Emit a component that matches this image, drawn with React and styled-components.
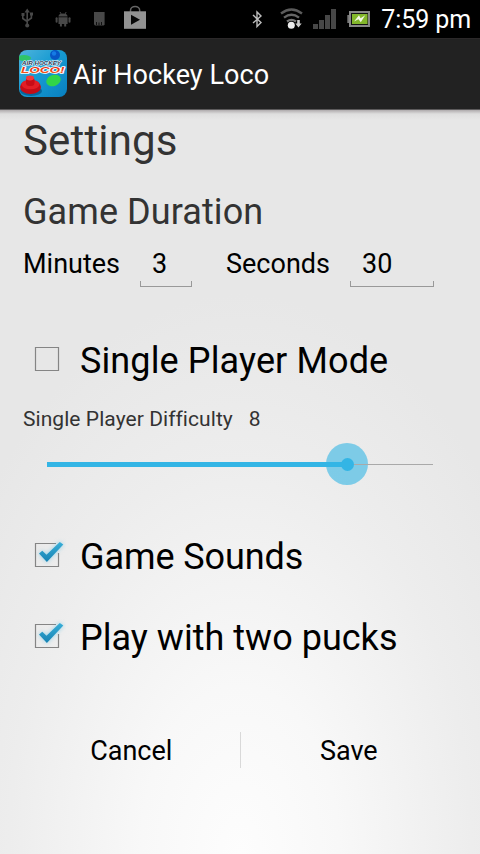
import React from 'react';
import styled, { createGlobalStyle } from 'styled-components';

const GlobalStyle = createGlobalStyle`
  * {
    box-sizing: border-box;
  }

  body {
    margin: 0;
    background: #000;
    font-family: Roboto, "Liberation Sans", sans-serif;
  }
`;

const Screen = styled.div`
  display: flex;
  flex-direction: column;
  width: 480px;
  height: 854px;
  overflow: hidden;
`;

const StatusBar = styled.header`
  display: flex;
  justify-content: space-between;
  height: 38px;
  flex: none;
  background: #000;
`;

const Clock = styled.span`
  margin-right: 9px;
  color: #fff;
  font-size: 25px;
  line-height: 40px;
  letter-spacing: -0.1px;
`;

const StatusGroup = styled.div`
  display: flex;
`;

const ActionBar = styled.div`
  display: flex;
  align-items: center;
  gap: 6px;
  height: 72px;
  flex: none;
  padding-left: 19px;
  background: #222;
  border-top: 1px solid #2b2829;
  border-bottom: 1px solid #5c5a5b;
`;

const AppTitle = styled.h1`
  margin: 2px 0 0;
  color: #fff;
  font-size: 27px;
  font-weight: 400;
  line-height: 32px;
  letter-spacing: 0.05px;
`;

const Content = styled.main`
  display: flex;
  flex-direction: column;
  flex: 1;
  padding: 6px 24px 0 23px;
  background:
    linear-gradient(rgba(90, 80, 85, 0.4), rgba(120, 120, 120, 0.08) 4px, transparent 10px),
    radial-gradient(ellipse 330px 560px at 50% 100%, #fdfdfd, #f8f8f8 30%, #ededed 70%, #e7e7e7);
`;

const Heading = styled.h2`
  margin: ${props => props.$top || 0}px 0 0;
  color: #333;
  font-size: ${props => props.$size}px;
  font-weight: 400;
  line-height: ${props => props.$line}px;
  letter-spacing: ${props => props.$spacing || 0}px;
`;

const DurationRow = styled.div`
  display: flex;
  height: 40px;
  margin-top: 15px;
  color: #000;
  font-size: 27px;
  line-height: 32px;
`;

const DurationLabel = styled.label`
  width: ${props => props.$width}px;
`;

const NumberField = styled.div`
  width: ${props => props.$width}px;
  height: 39px;
  margin-right: ${props => props.$after || 0}px;
  padding-left: 12px;
  background:
    linear-gradient(#999, #999) left bottom / 1px 6px no-repeat,
    linear-gradient(#999, #999) right bottom / 1px 6px no-repeat,
    linear-gradient(#999, #999) left bottom / 100% 1px no-repeat;
`;

const CheckRow = styled.label`
  display: flex;
  align-items: center;
  height: 48px;
  margin-top: ${props => props.$top}px;
  padding-left: 9px;
  color: #000;
  font-size: 36px;
  line-height: 48px;
  letter-spacing: ${props => props.$spacing || 0}px;
`;

const CheckIcon = styled.svg`
  width: 34px;
  height: 34px;
  margin: 0 14px 4px 0;
  flex: none;
`;

const DifficultyRow = styled.div`
  display: flex;
  gap: 16px;
  margin-top: 22px;
  color: #333;
  font-size: 21px;
  line-height: 24px;
  letter-spacing: 0.06px;
`;

const Slider = styled.div`
  display: flex;
  align-items: center;
  height: 42px;
  margin: 12px 23px 0 24px;
`;

const SliderFill = styled.div`
  height: 5px;
  margin-right: -21px;
  background: #33b5e5;
`;

const SliderThumb = styled.div`
  display: flex;
  align-items: center;
  justify-content: center;
  width: 42px;
  height: 42px;
  flex: none;
  border-radius: 50%;
  background: rgba(51, 181, 229, 0.6);

  &::after {
    content: '';
    width: 13px;
    height: 13px;
    border-radius: 50%;
    background: #33b5e5;
  }
`;

const SliderRest = styled.div`
  flex: 1;
  height: 1px;
  margin-left: -14px;
  background: #a9a9a9;
`;

const Buttons = styled.div`
  display: flex;
  align-items: center;
  margin: 64px -24px 0 -23px;
  padding: 0 23px;
`;

const Button = styled.button`
  flex: 1;
  height: 48px;
  padding: 0;
  border: 0;
  background: none;
  color: #000;
  font: 27px/50px Roboto, "Liberation Sans", sans-serif;
`;

const Divider = styled.div`
  width: 1px;
  height: 36px;
  background: #d9d9d9;
`;

const options = [
  { label: 'Game Sounds', top: 48, spacing: -0.08 },
  { label: 'Play with two pucks', top: 33, spacing: 0.02 },
];

const value = 8;
const trackWidth = 386;

function Notifications() {
  return (
    <svg width="160" height="38" viewBox="0 0 160 38">
      <g fill="none" stroke="#484848" strokeWidth="1.6">
        <path d="M27.2 11v14M22.8 14.5v4l4.4 3M31.4 14v4l-4.2 3" />
      </g>
      <g fill="#484848">
        <path d="M27.2 8.5l2.7 4h-5.4z" />
        <circle cx="27.2" cy="25.500" r="2" />
        <rect x="21.500" y="13" width="3" height="3" />
        <rect x="30" y="12.500" width="3" height="3" />
        <path d="M58.500 16.400c.3-2 1.500-2.800 4.500-2.800s4.200.8 4.600 2.800zM58.500 17.200h9.100v6.800h-1.400v2.400h-2v-2.400h-2.300v2.400h-2V24h-1.400z" />
        <rect x="55.600" y="17.200" width="2" height="5.500" rx="1" />
        <rect x="68.500" y="17.200" width="2" height="5.500" rx="1" />
        <path d="M94 12h10.600v12.800l-1 .8H95l-1-1.300z" />
      </g>
      <path d="M60 12l1.200 2M66.200 12L65 14" stroke="#484848" />
      <path d="M96.500 22v3M99 22.500v3M101.500 22v3" stroke="#111" />
      <path d="M130.500 12v-1.500a4.600 4 0 0 1 9.200 0V12" fill="none" stroke="#666" strokeWidth="1.500" />
      <rect x="124" y="11.300" width="22" height="17.500" fill="#929292" />
      <path d="M131 14.700l9 5-9 5z" fill="#080808" />
    </svg>
  );
}

function SystemIcons() {
  return (
    <svg width="136" height="38" viewBox="245 0 136 38">
      <path d="M253 15l8 7.500-4 4V12l4 4-8 7" fill="none" stroke="#bcbcbc" strokeWidth="1.400" />
      <g fill="none" stroke="#5b5b5b" strokeWidth="2.400">
        <path d="M281 13.500q10.500-8 21 0" />
        <path d="M284 17.600q7.500-5.500 15 0" stroke="#666" />
        <path d="M287 21.400q4.500-3 9 0" stroke="#777" />
      </g>
      <circle cx="291.300" cy="25.300" r="3.500" fill="#ededed" />
      <path d="M297.200 20h2.600v3.500h1.900l-3.200 4-3.200-4h1.900z" fill="#ccc" />
      <g fill="#474747">
        <rect x="313" y="24" width="5" height="5" />
        <rect x="319" y="20" width="5" height="9" />
        <rect x="325" y="15" width="5" height="14" />
        <rect x="331" y="9" width="5" height="20" />
      </g>
      <rect x="347.300" y="15" width="3" height="8" fill="#777" />
      <rect x="350" y="12" width="19" height="14" fill="#151515" stroke="#888" strokeWidth="2" />
      <rect x="352" y="14" width="15.500" height="10" fill="#83b72b" />
      <path d="M354 21.500l5-6.300 1.600 3 4.600-3-4.400 7-2.300-3z" fill="#f3f8e8" />
    </svg>
  );
}

function AppIcon() {
  return (
    <svg width="48" height="48" viewBox="0 0 48 48">
      <defs>
        <linearGradient id="table" x1="0" y1="0" x2="1" y2="1">
          <stop offset="0" stopColor="#50b4dc" />
          <stop offset=".45" stopColor="#179bd2" />
          <stop offset="1" stopColor="#087fc0" />
        </linearGradient>
        <linearGradient id="logo" x1="0" y1="0" x2="0" y2="1">
          <stop offset="0" stopColor="#e41a08" />
          <stop offset="1" stopColor="#f36b24" />
        </linearGradient>
        <clipPath id="corners">
          <rect width="48" height="47" rx="8" />
        </clipPath>
      </defs>
      <g clipPath="url(#corners)">
        <rect width="48" height="48" fill="url(#table)" />
        <ellipse cx="5" cy="8" rx="7" ry="3" fill="#2fc469" />
        <circle cx="36" cy="5" r="5" fill="#0755c5" />
        <circle cx="35" cy="3.500" r="2.200" fill="#167be5" />
        <ellipse cx="34.500" cy="30.500" rx="7.500" ry="5.500" fill="#31d449" transform="rotate(-20 34.500 30.500)" />
        <ellipse cx="12" cy="41" rx="11" ry="5" fill="#06669c" />
        <ellipse cx="11.500" cy="37" rx="10.500" ry="7" fill="#c50d17" />
        <ellipse cx="11.500" cy="34.500" rx="9" ry="4.800" fill="#e31e25" />
        <rect x="7" y="27" width="8.500" height="9" rx="3.500" fill="#c80c16" />
        <ellipse cx="11" cy="28" rx="4" ry="2.400" fill="#f33a3c" />
      </g>
      <g
        fontFamily="Liberation Sans, sans-serif"
        fontWeight="bold"
        fontStyle="italic"
        stroke="#fff"
        strokeLinejoin="round"
        paintOrder="stroke"
      >
        <text x="3" y="15" fontSize="4.6" textLength="39" lengthAdjust="spacingAndGlyphs" fill="#243553" strokeWidth="0.9">AIR HOCKEY</text>
        <text x="2" y="23" fontSize="8.400" textLength="43.500" lengthAdjust="spacingAndGlyphs" fill="url(#logo)" strokeWidth="1.500">LOCO!</text>
      </g>
    </svg>
  );
}

function Checkbox({ checked }) {
  return (
    <CheckIcon viewBox="0 0 34 34">
      <path
        d={checked ? 'M24 5.500H3.500v23h23V15' : 'M3.500 5.500h23v23h-23z'}
        fill="none"
        stroke="#858585"
        strokeWidth="1.200"
      />
      {checked && (
        <>
          <defs>
            <linearGradient id="tick" x1="0" y1="0" x2="0" y2="1">
              <stop offset="0" stopColor="#39afd8" />
              <stop offset="1" stopColor="#1682b3" />
            </linearGradient>
          </defs>
          <path
            d="M7 15.500l3.300-2.700 4.200 4L27.800 4l3.500 2.600L14.900 24z"
            fill="url(#tick)"
            style={{ filter: 'drop-shadow(0 0 2px rgba(51, 181, 229, 0.5))' }}
          />
        </>
      )}
    </CheckIcon>
  );
}

function App() {
  return (
    <Screen>
      <GlobalStyle />
      <StatusBar>
        <Notifications />
        <StatusGroup>
          <SystemIcons />
          <Clock>7:59 pm</Clock>
        </StatusGroup>
      </StatusBar>
      <ActionBar>
        <AppIcon />
        <AppTitle>Air Hockey Loco</AppTitle>
      </ActionBar>
      <Content>
        <Heading $size={42} $line={50} $spacing={0.15}>Settings</Heading>
        <Heading $size={36} $line={42} $top={25} $spacing={0.08}>Game Duration</Heading>
        <DurationRow>
          <DurationLabel $width={117}>Minutes</DurationLabel>
          <NumberField $width={52} $after={34}>3</NumberField>
          <DurationLabel $width={124}>Seconds</DurationLabel>
          <NumberField $width={84}>30</NumberField>
        </DurationRow>
        <CheckRow $top={49} $spacing={0.12}>
          <Checkbox />
          Single Player Mode
        </CheckRow>
        <DifficultyRow>
          <span>Single Player Difficulty</span>
          <span>{value}</span>
        </DifficultyRow>
        <Slider>
          <SliderFill style={{ width: 21 + (trackWidth - 42) * value / 10 + 4 }} />
          <SliderThumb />
          <SliderRest />
        </Slider>
        {options.map(option => (
          <CheckRow key={option.label} $top={option.top} $spacing={option.spacing}>
            <Checkbox checked />
            {option.label}
          </CheckRow>
        ))}
        <Buttons>
          <Button>Cancel</Button>
          <Divider />
          <Button>Save</Button>
        </Buttons>
      </Content>
    </Screen>
  );
}

export default App;
